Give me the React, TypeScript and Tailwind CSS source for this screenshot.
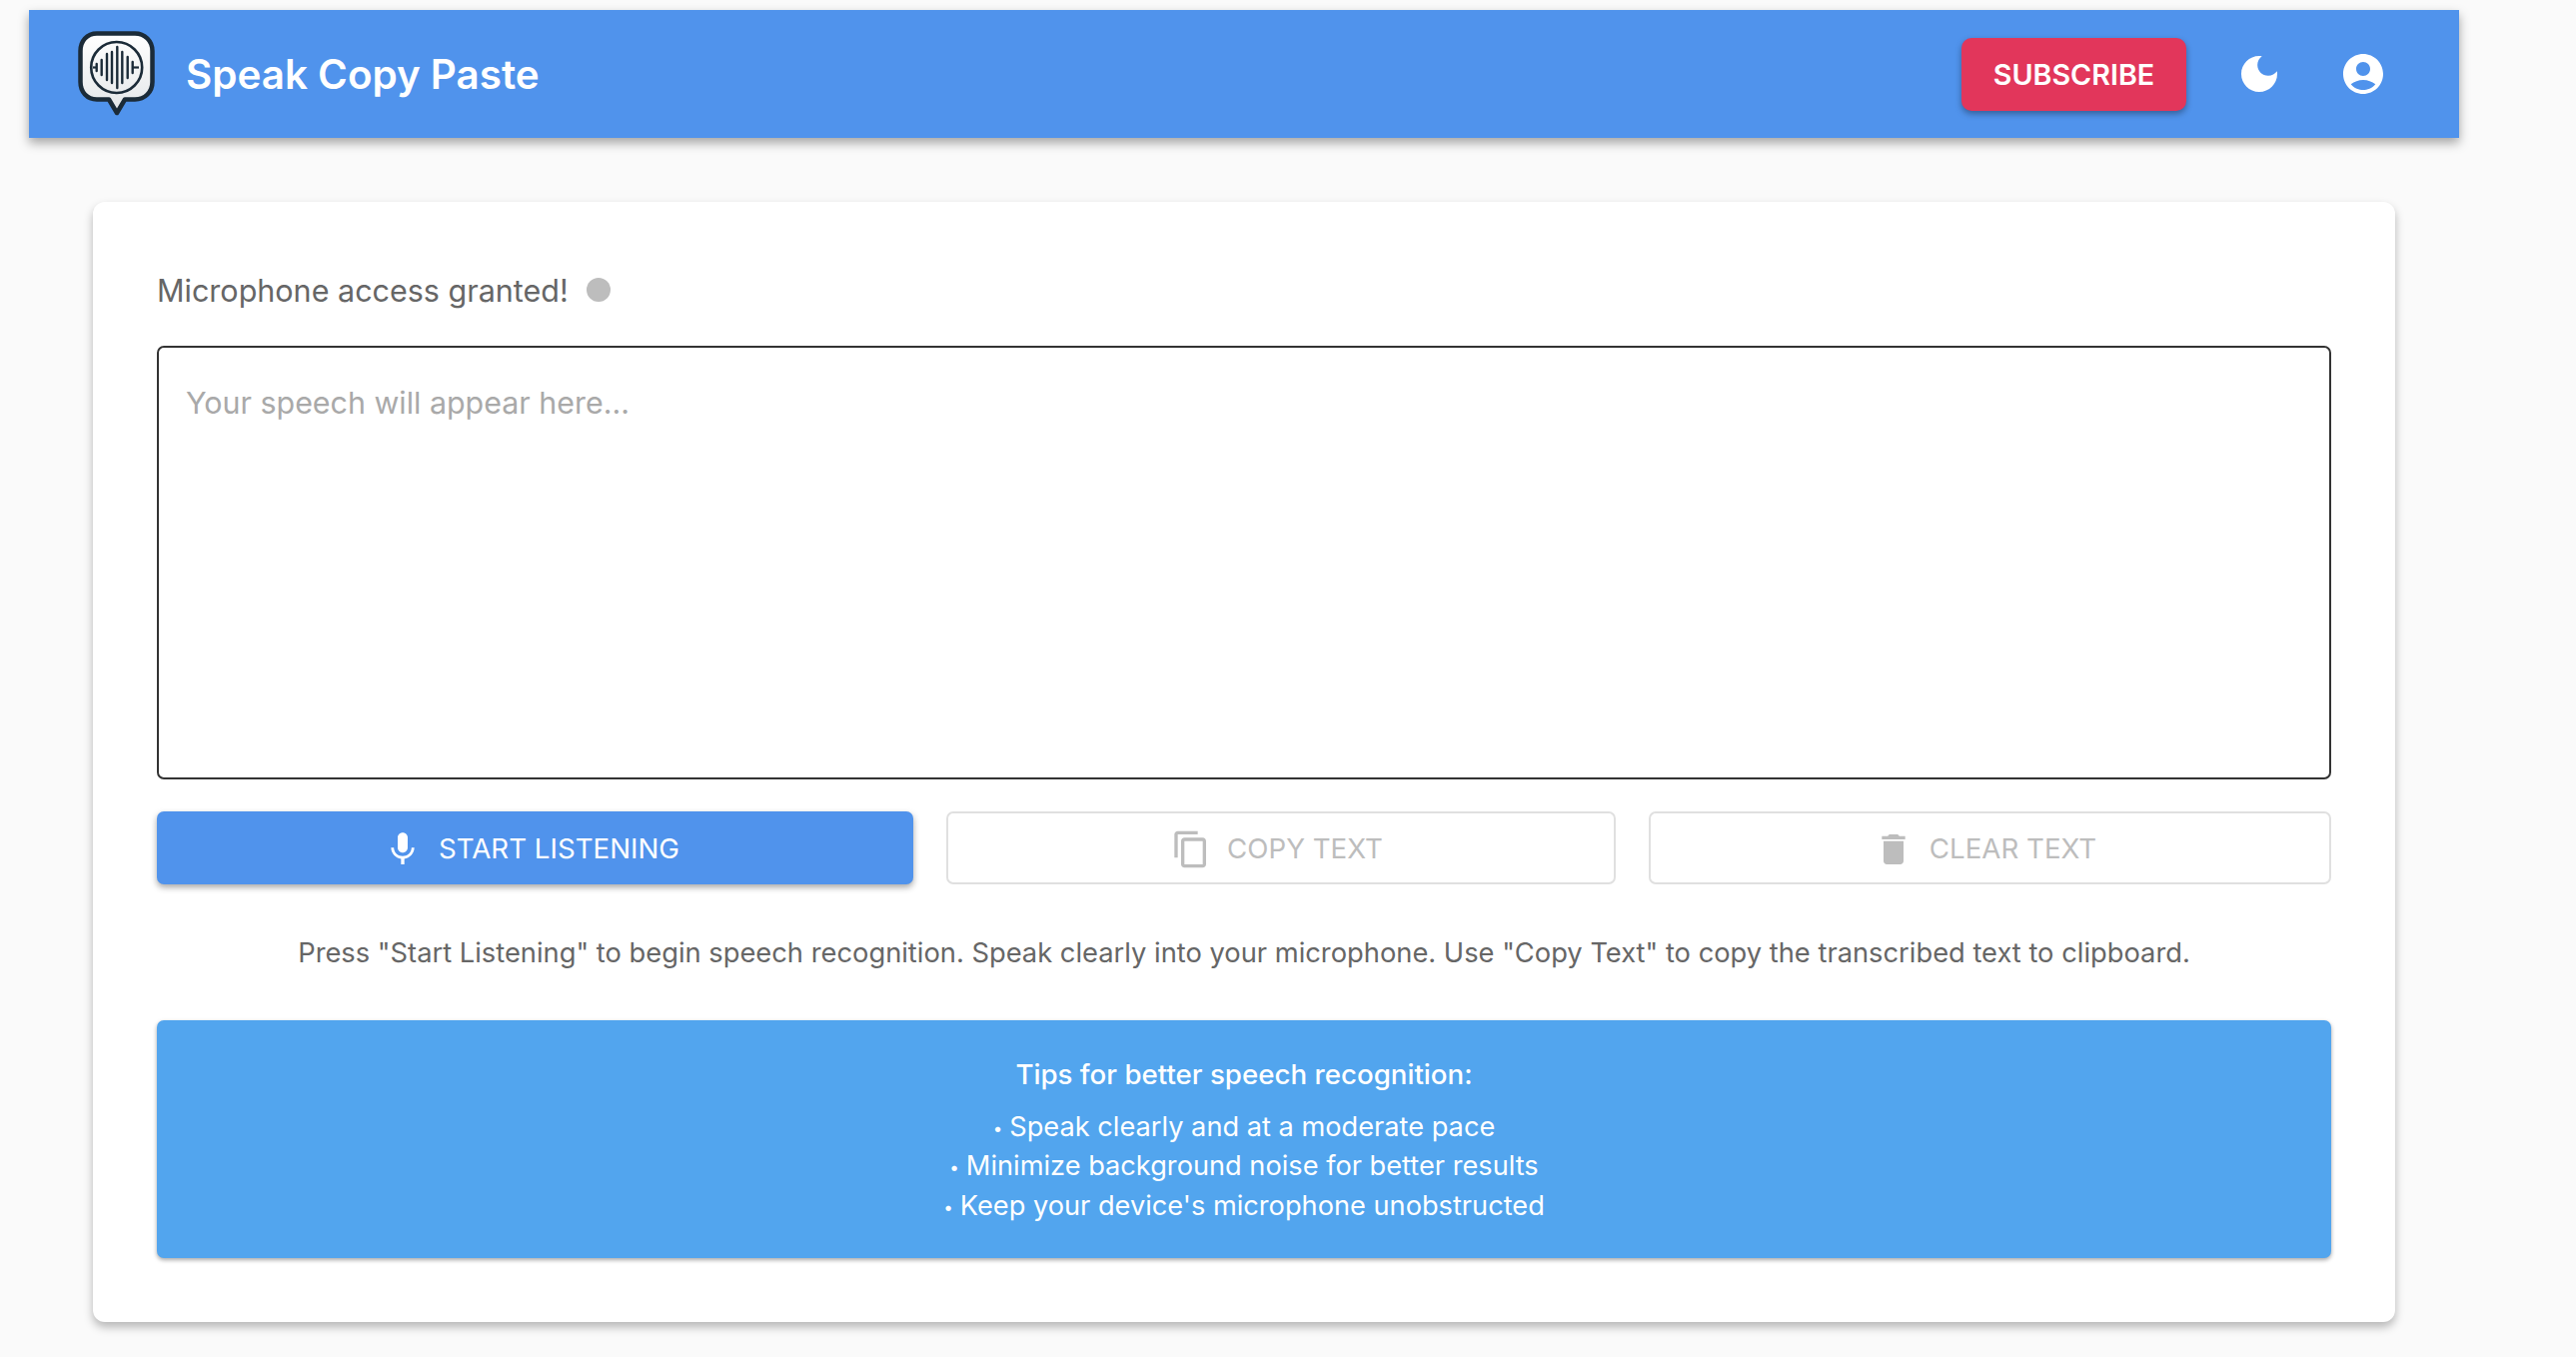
import React from 'react';

function Logo() {
  const bars = [
    [19.7, 35, 42],
    [24.7, 31, 46],
    [30, 25, 51],
    [35, 23, 54],
    [40.3, 18, 59],
    [45.3, 23, 54],
    [50.7, 28, 49],
    [55.7, 33, 44],
  ];
  return (
    <svg width="80" height="90" viewBox="0 0 80 90" className="shrink-0">
      <defs>
        <linearGradient id="bubble" x1="0" y1="0" x2="0" y2="1">
          <stop offset="0" stopColor="#ffffff" />
          <stop offset="1" stopColor="#e3e6e8" />
        </linearGradient>
      </defs>
      <path
        d="M20 4.5H58C68 4.5 75.5 12 75.5 22V53C75.5 63 68 70.5 58 70.5H48L40 84L32 70.5H20C10 70.5 3.5 63 3.5 53V22C3.5 12 10 4.5 20 4.5Z"
        fill="url(#bubble)"
        stroke="#1b2b38"
        strokeWidth="4.5"
        strokeLinejoin="round"
      />
      <circle cx="39.7" cy="38.5" r="25.5" fill="none" stroke="#1b2b38" strokeWidth="2.6" />
      {bars.map(([x, y1, y2]) => (
        <line key={x} x1={x} x2={x} y1={y1} y2={y2} stroke="#1b2b38" strokeWidth="2.4" strokeLinecap="round" />
      ))}
      <line x1="55.7" x2="62" y1="38.5" y2="38.5" stroke="#1b2b38" strokeWidth="2.2" />
      <line x1="16" x2="19.7" y1="38.5" y2="38.5" stroke="#1b2b38" strokeWidth="2.2" />
    </svg>
  );
}

function Icon({ d, size, className }: { d: string; size: number; className?: string }) {
  return (
    <svg width={size} height={size} viewBox="0 0 24 24" fill="currentColor" className={className}>
      <path d={d} />
    </svg>
  );
}

function Tip({ children }: { children: React.ReactNode }) {
  return (
    <p className="h-[39.5px]">
      <span className="text-[17px] leading-none align-[2px] mr-[7px]">•</span>
      {children}
    </p>
  );
}

const moon = 'M12 3c-4.97 0-9 4.03-9 9s4.03 9 9 9 9-4.03 9-9c0-.46-.04-.92-.1-1.36-.98 1.37-2.58 2.26-4.4 2.26-2.98 0-5.4-2.42-5.4-5.4 0-1.81.89-3.42 2.26-4.4-.44-.06-.9-.1-1.36-.1z';
const account = 'M12 2C6.48 2 2 6.48 2 12s4.48 10 10 10 10-4.48 10-10S17.52 2 12 2zm0 4c1.93 0 3.5 1.57 3.5 3.5S13.93 13 12 13s-3.5-1.57-3.5-3.5S10.07 6 12 6zm0 14c-2.03 0-4.43-.82-6.14-2.88C7.55 15.8 9.68 15 12 15s4.45.8 6.14 2.12C16.43 19.18 14.03 20 12 20z';
const mic = 'M12 14c1.66 0 2.99-1.34 2.99-3L15 5c0-1.66-1.34-3-3-3S9 3.34 9 5v6c0 1.66 1.34 3 3 3zm5.3-3c0 3-2.54 5.1-5.3 5.1S6.7 14 6.7 11H5c0 3.41 2.72 6.23 6 6.72V21h2v-3.28c3.28-.48 6-3.3 6-6.72h-1.7z';
const copy = 'M16 1H4c-1.1 0-2 .9-2 2v14h2V3h12V1zm3 4H8c-1.1 0-2 .9-2 2v14c0 1.1.9 2 2 2h11c1.1 0 2-.9 2-2V7c0-1.1-.9-2-2-2zm0 16H8V7h11v14z';
const trash = 'M6 19c0 1.1.9 2 2 2h8c1.1 0 2-.9 2-2V7H6v12zM19 4h-3.5l-1-1h-5l-1 1H5v2h14V4z';

export default function App() {
  return (
    <div className="min-h-[1358px] bg-[#fafafa] pt-[10px] pl-[29px] font-['Inter',sans-serif]">
      <div className="w-[2432px]">
        <header className="h-[128px] bg-[#5093ec] flex items-center pl-[48px] shadow-[0_5px_10px_rgba(0,0,0,0.35)] text-white">
          <Logo />
          <h1 className="ml-[29px] pt-[2px] text-[40.4px] font-semibold leading-none">Speak Copy Paste</h1>
          <div className="ml-auto flex items-center">
            <button className="w-[225px] h-[73px] pt-[2px] rounded-[10px] bg-[#e2365b] text-[28.7px] font-semibold shadow-[0_3px_6px_rgba(0,0,0,0.35)]">
              SUBSCRIBE
            </button>
            <Icon d={moon} size={48} className="ml-[49px]" />
            <Icon d={account} size={48} className="ml-[56px] mr-[72px]" />
          </div>
        </header>

        <main className="mx-[64px] mt-[64px] h-[1121px] bg-white rounded-[12px] px-[64px] pt-[64px] shadow-[0_5px_10px_rgba(0,0,0,0.28)]">
          <div className="flex items-center h-[48px] text-[30.5px] text-[#666666]">
            <span className="pt-[2px]">Microphone access granted!</span>
            <span className="ml-[18px] w-[24px] h-[24px] rounded-full bg-[#bdbdbd]" />
          </div>
          <div className="mt-[32px] h-[434px] border-2 border-[#333333] rounded-[7px] px-[27px] pt-[37px] text-[30.4px] leading-[36px] text-[#a9a9a9]">
            Your speech will appear here...
          </div>

          <div className="mt-[32px] flex gap-[33px] h-[73px]">
            <button className="w-[757px] pt-[2px] rounded-[7px] bg-[#5093ec] text-white flex items-center justify-center pr-[8px] gap-[16px] text-[27.7px] shadow-[0_3px_6px_rgba(0,0,0,0.35)]">
              <Icon d={mic} size={40} />
              START LISTENING
            </button>
            <button className="w-[670px] pt-[2px] rounded-[7px] border-2 border-[#e0e0e0] text-[#bdbdbd] flex items-center justify-center pr-[8px] gap-[16px] text-[27.7px]">
              <Icon d={copy} size={40} />
              COPY TEXT
            </button>
            <button className="w-[683px] pt-[2px] rounded-[7px] border-2 border-[#e0e0e0] text-[#bdbdbd] flex items-center justify-center pr-[10px] gap-[16px] text-[27.7px]">
              <Icon d={trash} size={40} />
              CLEAR TEXT
            </button>
          </div>

          <p className="mt-[49px] text-center text-[27.3px] leading-[40px] text-[#666666]">
            Press "Start Listening" to begin speech recognition. Speak clearly into your microphone. Use "Copy Text" to copy the transcribed text to clipboard.
          </p>

          <div className="mt-[47px] h-[238px] rounded-[7px] bg-[#52a5ee] text-white text-center text-[27.2px] leading-[39.5px] pt-[35px] shadow-[0_2px_4px_rgba(0,0,0,0.35)]">
            <p className="font-medium text-[27.7px] mb-[12px]">Tips for better speech recognition:</p>
            <Tip>Speak clearly and at a moderate pace</Tip>
            <Tip>Minimize background noise for better results</Tip>
            <Tip>Keep your device's microphone unobstructed</Tip>
          </div>
        </main>
      </div>
    </div>
  );
}
